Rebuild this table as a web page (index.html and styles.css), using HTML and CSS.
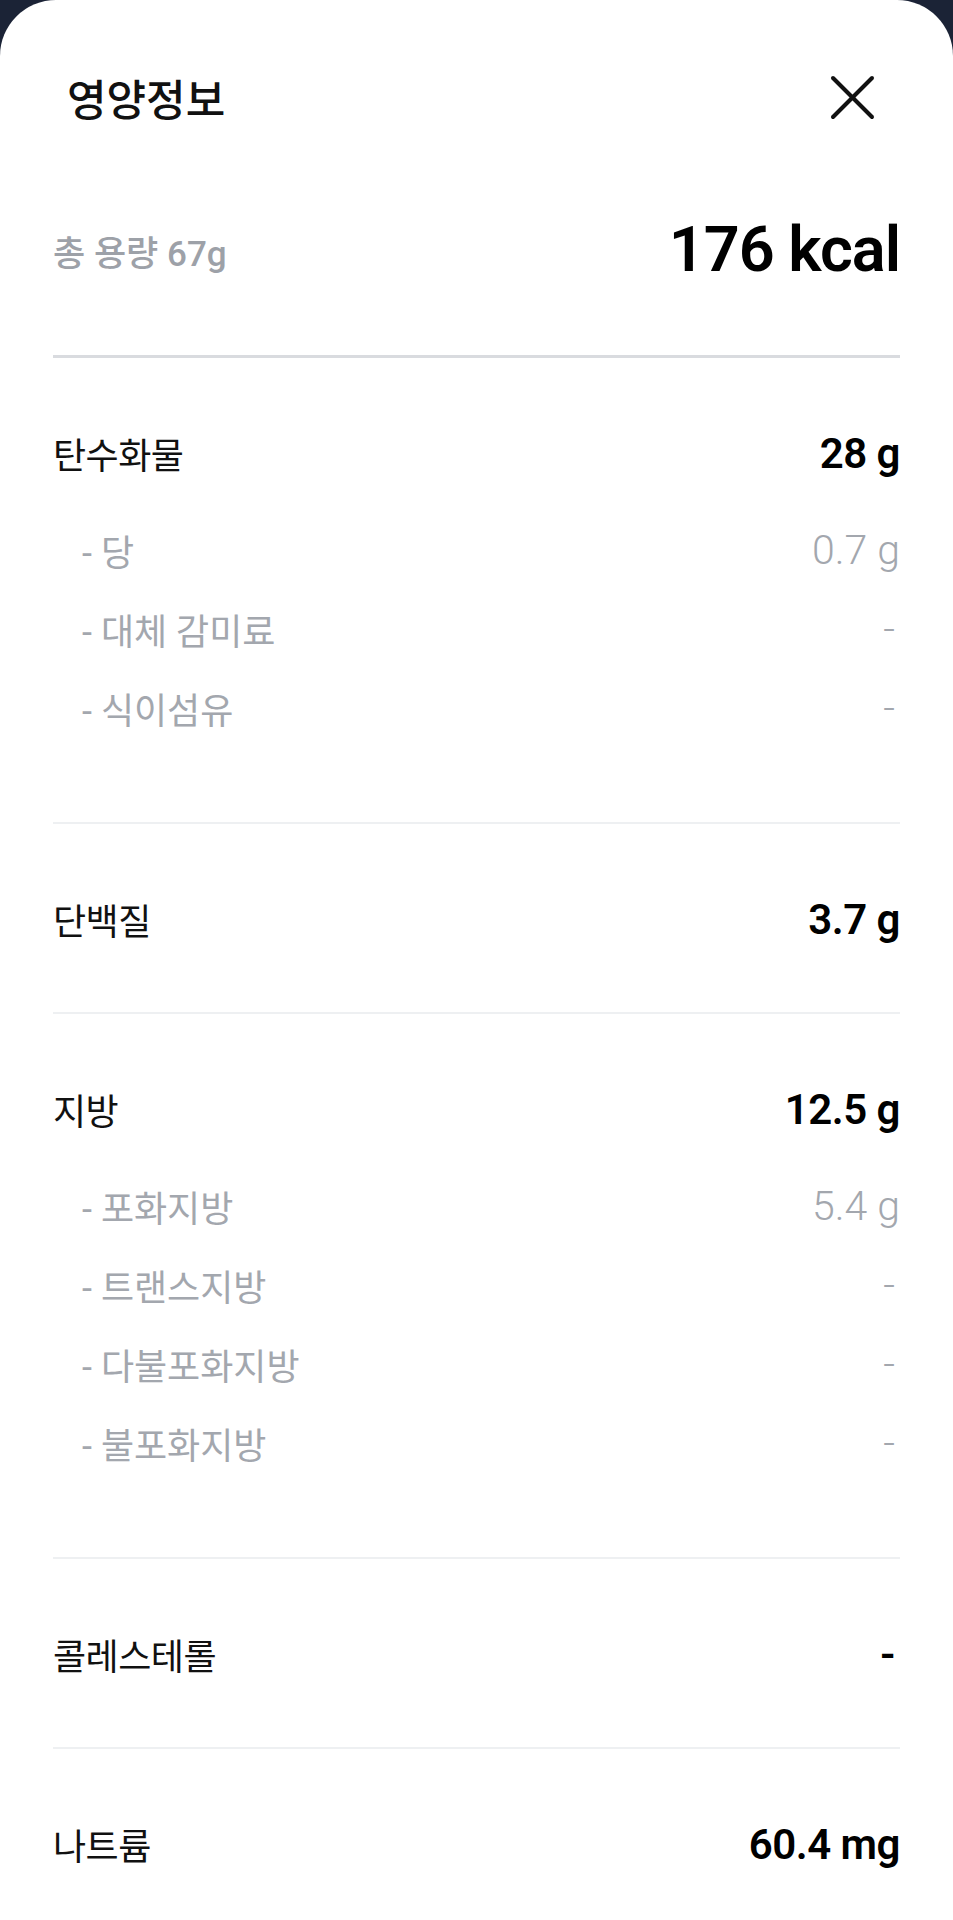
FILE: index.html
```html
<!DOCTYPE html>
<html lang="ko">
<head>
    <meta charset="UTF-8">
    <meta name="viewport" content="width=device-width, initial-scale=1.0">
    <title>영양정보</title>
    <link rel="stylesheet" href="styles.css">
</head>
<body>
    <div class="sheet">
        <header class="sheet-header">
            <h1>영양정보</h1>
            <button class="btn-close" aria-label="닫기">
                <svg width="45" height="45" viewBox="0 0 45 45">
                    <line x1="3" y1="3" x2="42" y2="42" />
                    <line x1="42" y1="3" x2="3" y2="42" />
                </svg>
            </button>
        </header>

        <div class="summary">
            <span class="summary-label">총 용량 67g</span>
            <span class="summary-kcal">176 kcal</span>
        </div>

        <section class="nutrient">
            <div class="row">
                <span class="row-label">탄수화물</span>
                <span class="row-value">28 g</span>
            </div>
            <ul class="sub-list">
                <li class="sub-row"><span>- 당</span><span class="sub-value">0.7 g</span></li>
                <li class="sub-row"><span>- 대체 감미료</span><span class="sub-value empty">-</span></li>
                <li class="sub-row"><span>- 식이섬유</span><span class="sub-value empty">-</span></li>
            </ul>
        </section>

        <section class="nutrient">
            <div class="row">
                <span class="row-label">단백질</span>
                <span class="row-value">3.7 g</span>
            </div>
        </section>

        <section class="nutrient">
            <div class="row">
                <span class="row-label">지방</span>
                <span class="row-value">12.5 g</span>
            </div>
            <ul class="sub-list">
                <li class="sub-row"><span>- 포화지방</span><span class="sub-value">5.4 g</span></li>
                <li class="sub-row"><span>- 트랜스지방</span><span class="sub-value empty">-</span></li>
                <li class="sub-row"><span>- 다불포화지방</span><span class="sub-value empty">-</span></li>
                <li class="sub-row"><span>- 불포화지방</span><span class="sub-value empty">-</span></li>
            </ul>
        </section>

        <section class="nutrient">
            <div class="row">
                <span class="row-label">콜레스테롤</span>
                <span class="row-value empty">-</span>
            </div>
        </section>

        <section class="nutrient">
            <div class="row">
                <span class="row-label">나트륨</span>
                <span class="row-value">60.4 mg</span>
            </div>
        </section>
    </div>
</body>
</html>
```

FILE: styles.css
```css
* {
    margin: 0;
    padding: 0;
    box-sizing: border-box;
}

body {
    font-family: Roboto, "Noto Sans CJK KR", sans-serif;
    background-color: #1b2336;
    color: #111;
}

.sheet {
    min-height: 1920px;
    padding: 0 53px;
    background: #fff;
    border-radius: 56px 56px 0 0;
}

.sheet-header {
    display: flex;
    justify-content: space-between;
    align-items: center;
    height: 194px;
    padding: 0 25px 0 14px;
}

.sheet-header h1 {
    font-size: 43px;
    font-weight: 500;
    color: #111;
}

.btn-close {
    display: flex;
    background: none;
    border: none;
    cursor: pointer;
}

.btn-close line {
    stroke: #111;
    stroke-width: 4;
    stroke-linecap: round;
}

.summary {
    display: flex;
    justify-content: space-between;
    align-items: center;
    margin-top: 18px;
    padding-bottom: 67px;
    border-bottom: 3px solid #d9dbdf;
}

.summary-label {
    font-size: 35px;
    font-weight: 500;
    color: #9da1a8;
}

.summary-kcal {
    font-size: 63px;
    line-height: 76px;
    font-weight: 600;
    letter-spacing: -1px;
    color: #000;
}

.nutrient {
    padding: 72px 0 70px;
    border-bottom: 2px solid #eef0f2;
}

.nutrient:last-child {
    border-bottom: none;
}

.row {
    display: flex;
    justify-content: space-between;
    align-items: center;
    height: 46px;
}

.row-label {
    font-size: 36px;
    letter-spacing: -0.5px;
    color: #111;
}

.row-value {
    font-size: 42px;
    font-weight: 600;
    letter-spacing: -0.5px;
    color: #000;
}

.sub-list {
    list-style: none;
    margin: 34px 0 5px;
}

.sub-row {
    display: flex;
    justify-content: space-between;
    align-items: center;
    height: 79px;
    padding-left: 29px;
    font-size: 36px;
    color: #a3a7ae;
}

.sub-value {
    font-size: 41px;
    font-weight: 300;
}

.empty {
    padding-right: 5px;
}
```
